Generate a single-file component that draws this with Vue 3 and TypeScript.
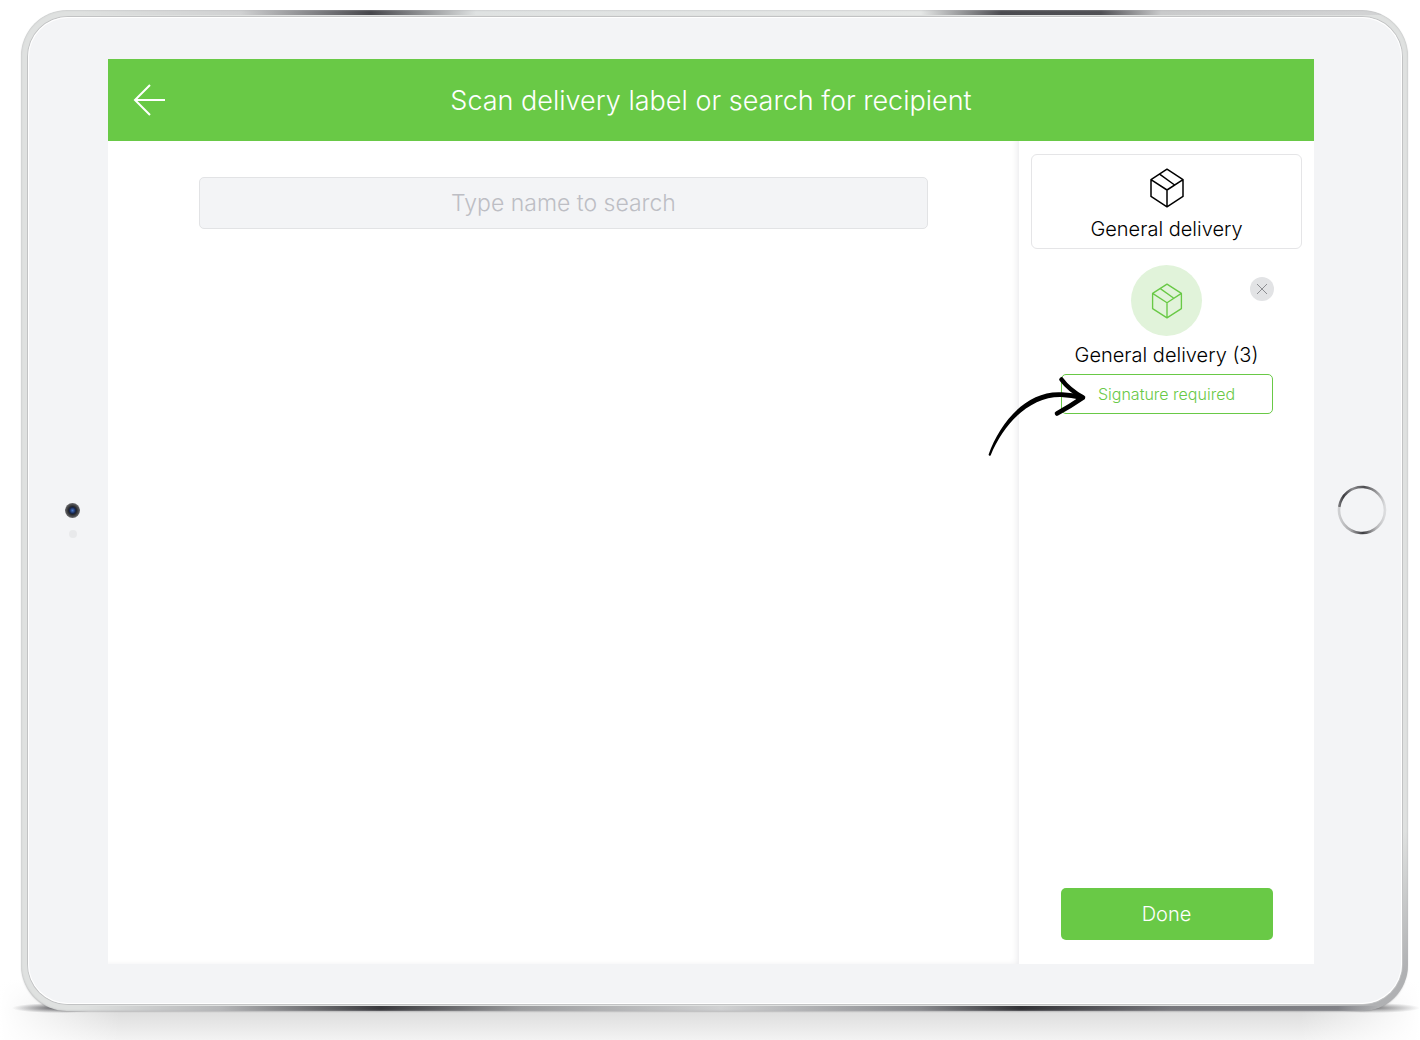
<script setup lang="ts">
import { ref } from 'vue'

interface Delivery {
  id: number
  label: string
  count: number
  signature: boolean
}

const query = ref('')
const deliveries = ref<Delivery[]>([
  { id: 1, label: 'General delivery', count: 3, signature: true },
])

function addDelivery(): void {
  const first = deliveries.value[0]
  if (first) first.count += 1
  else deliveries.value.push({ id: 1, label: 'General delivery', count: 1, signature: true })
}

function removeDelivery(id: number): void {
  deliveries.value = deliveries.value.filter((d) => d.id !== id)
}
</script>

<template>
  <div class="stage">
    <div class="tablet">
      <div class="face">
        <div class="bezel sensors">
          <span class="camera"></span>
          <span class="light"></span>
        </div>

        <div class="screen">
          <header class="topbar">
            <button class="back" type="button" aria-label="Back">
              <svg viewBox="0 0 34 34" width="34" height="34" fill="none" stroke="#fff" stroke-width="2">
                <path d="M33 17H3M18 2 3 17l15 15" />
              </svg>
            </button>
            <h1>Scan delivery label or search for recipient</h1>
          </header>

          <div class="content">
            <main class="search-pane">
              <input v-model="query" class="search" type="text" aria-label="Type name to search" placeholder="Type name to search" />
            </main>

            <aside class="sidebar">
              <button class="kind" type="button" @click="addDelivery">
                <svg viewBox="0 0 36 40" width="36" height="40" fill="none" stroke="currentColor" stroke-width="1.5" stroke-linejoin="round">
                  <path d="M18 1.2 34 11.6V28.4L18 38.8 2 28.4V11.6ZM2 11.6 18 22 34 11.6M18 22V38.8M10.6 6.2 25.6 17" />
                </svg>
                <span>General delivery</span>
              </button>

              <section v-for="item in deliveries" :key="item.id" class="item">
                <div class="badge">
                  <svg viewBox="0 0 36 40" width="34" height="36" fill="none" stroke="currentColor" stroke-width="1.5" stroke-linejoin="round">
                    <path d="M18 1.2 34 11.6V28.4L18 38.8 2 28.4V11.6ZM2 11.6 18 22 34 11.6M18 22V38.8M10.6 6.2 25.6 17" />
                  </svg>
                </div>
                <button class="remove" type="button" aria-label="Remove" @click="removeDelivery(item.id)">
                  <svg viewBox="0 0 12 12" width="12" height="12" stroke="#77797c" stroke-width="0.8">
                    <path d="M1 1l10 10M11 1 1 11" />
                  </svg>
                </button>
                <p class="name">{{ item.label }} ({{ item.count }})</p>
                <div v-if="item.signature" class="signature">
                  <button class="signature-button" type="button">Signature required</button>
                  <svg class="pointer" viewBox="0 0 100 84" width="100" height="84" aria-hidden="true">
                    <path d="M1.6 80.6C13 48 40 16 75 18.300Q86 19 96 21L95 26Q84 23.500 74 23C44 22.500 17 48 3.600 81.400Q2 82.500 1.600 80.600Z" fill="#000" />
                    <path d="M74.500 5.500C80 13 88 19 96 23.500C88 29 80 34 70 39.500" fill="none" stroke="#000" stroke-width="4.600" stroke-linecap="round" stroke-linejoin="round" />
                  </svg>
                </div>
              </section>

              <button class="done" type="button">Done</button>
            </aside>
          </div>
        </div>

        <div class="bezel">
          <svg class="home" viewBox="0 0 50 50" width="50" height="50" aria-hidden="true">
            <defs>
              <linearGradient id="ring-top" gradientUnits="userSpaceOnUse" x1="2" y1="0" x2="48" y2="0">
                <stop offset="0" stop-color="#77777a" />
                <stop offset="0.100" stop-color="#3c3c40" />
                <stop offset="0.300" stop-color="#8b8b8e" />
                <stop offset="0.550" stop-color="#4c4c50" />
                <stop offset="0.850" stop-color="#a5a5a7" />
                <stop offset="1" stop-color="#dcdddf" />
              </linearGradient>
              <linearGradient id="ring-bottom" gradientUnits="userSpaceOnUse" x1="2" y1="0" x2="48" y2="0">
                <stop offset="0" stop-color="#cfd0d2" />
                <stop offset="0.250" stop-color="#a8a8aa" />
                <stop offset="0.520" stop-color="#3c3c40" />
                <stop offset="0.800" stop-color="#b4b4b6" />
                <stop offset="1" stop-color="#dcdddf" />
              </linearGradient>
            </defs>
            <path d="M2.200 22a23 23 0 0 1 45.800 3" fill="none" stroke="url(#ring-top)" stroke-width="2.600" />
            <path d="M2.200 22a23 23 0 1 0 45.800 3" fill="none" stroke="url(#ring-bottom)" stroke-width="2.600" />
          </svg>
        </div>
      </div>
    </div>
  </div>
</template>

<style>
body {
  margin: 0;
  background: #fff;
}
</style>

<style scoped>
* {
  box-sizing: border-box;
}

.stage {
  --green: #69c946;
  --face: #f3f4f6;
  display: flex;
  min-height: 100vh;
  padding: 10px 12px 29px 21px;
  overflow: hidden;
  font-family: Inter, "Liberation Sans", sans-serif;
  font-weight: 300;
  color: #000;
  background:
    radial-gradient(closest-side, #66666a, transparent) left 12px bottom 27px / 90px 10px no-repeat,
    radial-gradient(closest-side, #88888a, transparent) right 0 bottom 27px / 90px 10px no-repeat,
    linear-gradient(to right, #fff, transparent 120px, transparent calc(100% - 120px), #fff) bottom / 100% 60px no-repeat,
    linear-gradient(#fff, #dcdcdc 30px, #f3f3f3) bottom / 100% 60px no-repeat,
    #fff;
}

button,
input {
  font: inherit;
  color: inherit;
  margin: 0;
  padding: 0;
  cursor: pointer;
}

svg {
  display: block;
}

.tablet {
  display: flex;
  flex: 1;
  padding: 7px 6px 7px 7px;
  border-radius: 46px;
  background:
    linear-gradient(to right, transparent 60px, #d0d1d2 220px, #46464b 350px, #dfe2e2 455px, #e5e7e6 900px, #4b4b50 980px, #505055 1080px, #c9cacb 1140px, #d4d5d6) top / 100% 5px no-repeat,
    linear-gradient(to right, transparent 60px, #b5b6b8 200px, #37373b 360px, #9a9b9d 500px, #d0d1d2 700px, #88898d 900px, #303034 1000px, #77777c 1150px, #808186 calc(100% - 70px), transparent calc(100% - 30px)) bottom / 100% 5px no-repeat,
    radial-gradient(circle at 100% 100%, #b0b1b3 40px, transparent 180px),
    #dfe1e0;
  box-shadow:
    inset 0 0 2px #b3b4b5,
    0 1px 2px -1px #77777a;
}

.face {
  display: flex;
  flex: 1;
  padding: 42px 0 40px;
  border-radius: 40px;
  background: var(--face);
  box-shadow:
    inset 0 0 0 1px #fff,
    0 0 0 1px #c2c3c4;
}

.bezel {
  display: flex;
  flex: none;
  width: 88px;
  flex-direction: column;
  align-items: center;
  justify-content: center;
  padding-bottom: 3px;
}

.sensors {
  gap: 12px;
  width: 80px;
  padding: 18px 0 0 9px;
}

.camera {
  width: 15px;
  height: 15px;
  border-radius: 50%;
  background: radial-gradient(circle, #4a79cc 0, #16264f 3px, #25272c 4px, #4d4e51 6px, #77787a 8px);
}

.light {
  width: 8px;
  height: 8px;
  border-radius: 50%;
  background: #e8e9eb;
}

.home {
  margin-left: 8px;
}

.screen {
  display: flex;
  flex: 1;
  flex-direction: column;
  min-width: 0;
  background: #fff;
}

.topbar {
  display: flex;
  flex: none;
  align-items: center;
  height: 82px;
  padding: 0 24px;
  color: #fff;
  background: var(--green);
}

.back {
  width: 34px;
  height: 34px;
  border: 0;
  background: none;
}

.topbar h1 {
  flex: 1;
  margin: 2px 34px 0 0;
  font-size: 27px;
  font-weight: 300;
  line-height: 36px;
  text-align: center;
}

.content {
  display: flex;
  flex: 1;
}

.search-pane {
  flex: 1;
  padding: 36px 90px 36px 91px;
  box-shadow: inset -4px -2px 6px -3px #ececee;
}

.search {
  width: 100%;
  height: 52px;
  border: 1px solid #e2e3e5;
  border-radius: 5px;
  outline: 0;
  background: var(--face);
  font-size: 23px;
  text-align: center;
  cursor: text;
}

.search::placeholder {
  color: #bdbec4;
  opacity: 1;
}

.sidebar {
  display: flex;
  flex: none;
  flex-direction: column;
  align-items: center;
  width: 296px;
  padding: 13px 12px 24px;
  border-left: 1px solid #f1f1f3;
}

.kind {
  display: flex;
  flex-direction: column;
  align-items: center;
  gap: 7px;
  width: 100%;
  height: 95px;
  padding: 13px 0 0;
  border: 1px solid #e5e5e7;
  border-radius: 6px;
  background: #fff;
  font-size: 20px;
  line-height: 28px;
}

.item {
  position: relative;
  display: flex;
  flex-direction: column;
  align-items: center;
  width: 212px;
  margin-top: 16px;
}

.badge {
  display: flex;
  align-items: center;
  justify-content: center;
  width: 71px;
  height: 71px;
  border-radius: 50%;
  color: var(--green);
  background: #e1f3da;
}

.remove {
  position: absolute;
  top: 12px;
  right: -1px;
  display: flex;
  align-items: center;
  justify-content: center;
  width: 24px;
  height: 24px;
  border: 0;
  border-radius: 50%;
  background: #e2e3e5;
}

.name {
  margin: 5px 0;
  font-size: 20px;
  line-height: 28px;
}

.signature {
  position: relative;
  width: 100%;
}

.signature-button {
  width: 100%;
  height: 40px;
  border: 1px solid var(--green);
  border-radius: 5px;
  background: #fff;
  color: var(--green);
  font-size: 16px;
}

.pointer {
  position: absolute;
  top: 0;
  left: -74px;
  pointer-events: none;
}

.done {
  width: 212px;
  height: 52px;
  margin-top: auto;
  border: 0;
  border-radius: 5px;
  background: var(--green);
  color: #fff;
  font-size: 20px;
}
</style>
